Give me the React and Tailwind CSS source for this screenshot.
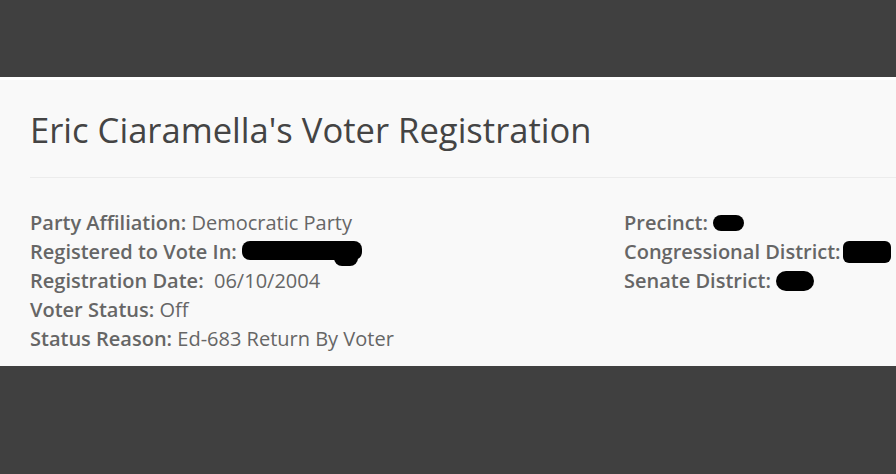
const Row = ({ label, children }) => (
  <div className="flex items-center whitespace-nowrap">
    <span className="font-semibold">{label}</span>
    {children}
  </div>
);

const Blob = ({ className }) => (
  <span className={`inline-block bg-black ${className}`} />
);

export default function App() {
  return (
    <div
      className="flex h-[474px] w-[896px] flex-col bg-[#404040] text-[#666]"
      style={{ fontFamily: '"Open Sans", sans-serif' }}
    >
      <div className="h-[77px]" />
      <div className="h-[289px] overflow-hidden border-t-[3px] border-white bg-[#f9f9f9] pl-[30px]">
        <h1 className="pt-[28px] pb-[25px] text-[34.6px] leading-[44px] text-[#444]">
          Eric Ciaramella's Voter Registration
        </h1>
        <div className="border-t border-[#ececec]" />
        <div className="flex pt-[30px] text-[20px] leading-[29px]">
          <div className="w-[594px]">
            <Row label="Party Affiliation:">&nbsp;Democratic Party</Row>
            <Row label="Registered to Vote In:">
              <span className="relative ml-[5px] inline-block h-[24px] w-[122px]">
                <Blob className="absolute top-[1px] left-0 h-[19px] w-[120px] rounded-[8px]" />
                <Blob className="absolute top-[10px] left-[92px] h-[16px] w-[24px] rounded-full" />
              </span>
            </Row>
            <Row label="Registration Date:">&nbsp;&nbsp;06/10/2004</Row>
            <Row label="Voter Status:">&nbsp;Off</Row>
            <Row label="Status Reason:">&nbsp;Ed-683 Return By Voter</Row>
          </div>
          <div>
            <Row label="Precinct:">
              <Blob className="ml-[5px] h-[16px] w-[31px] rounded-full" />
            </Row>
            <Row label="Congressional District:">
              <Blob className="ml-[2px] h-[22px] w-[48px] rounded-[6px]" />
            </Row>
            <Row label="Senate District:">
              <Blob className="ml-[5px] h-[20px] w-[38px] rounded-full" />
            </Row>
          </div>
        </div>
      </div>
      <div className="flex-1" />
    </div>
  );
}
